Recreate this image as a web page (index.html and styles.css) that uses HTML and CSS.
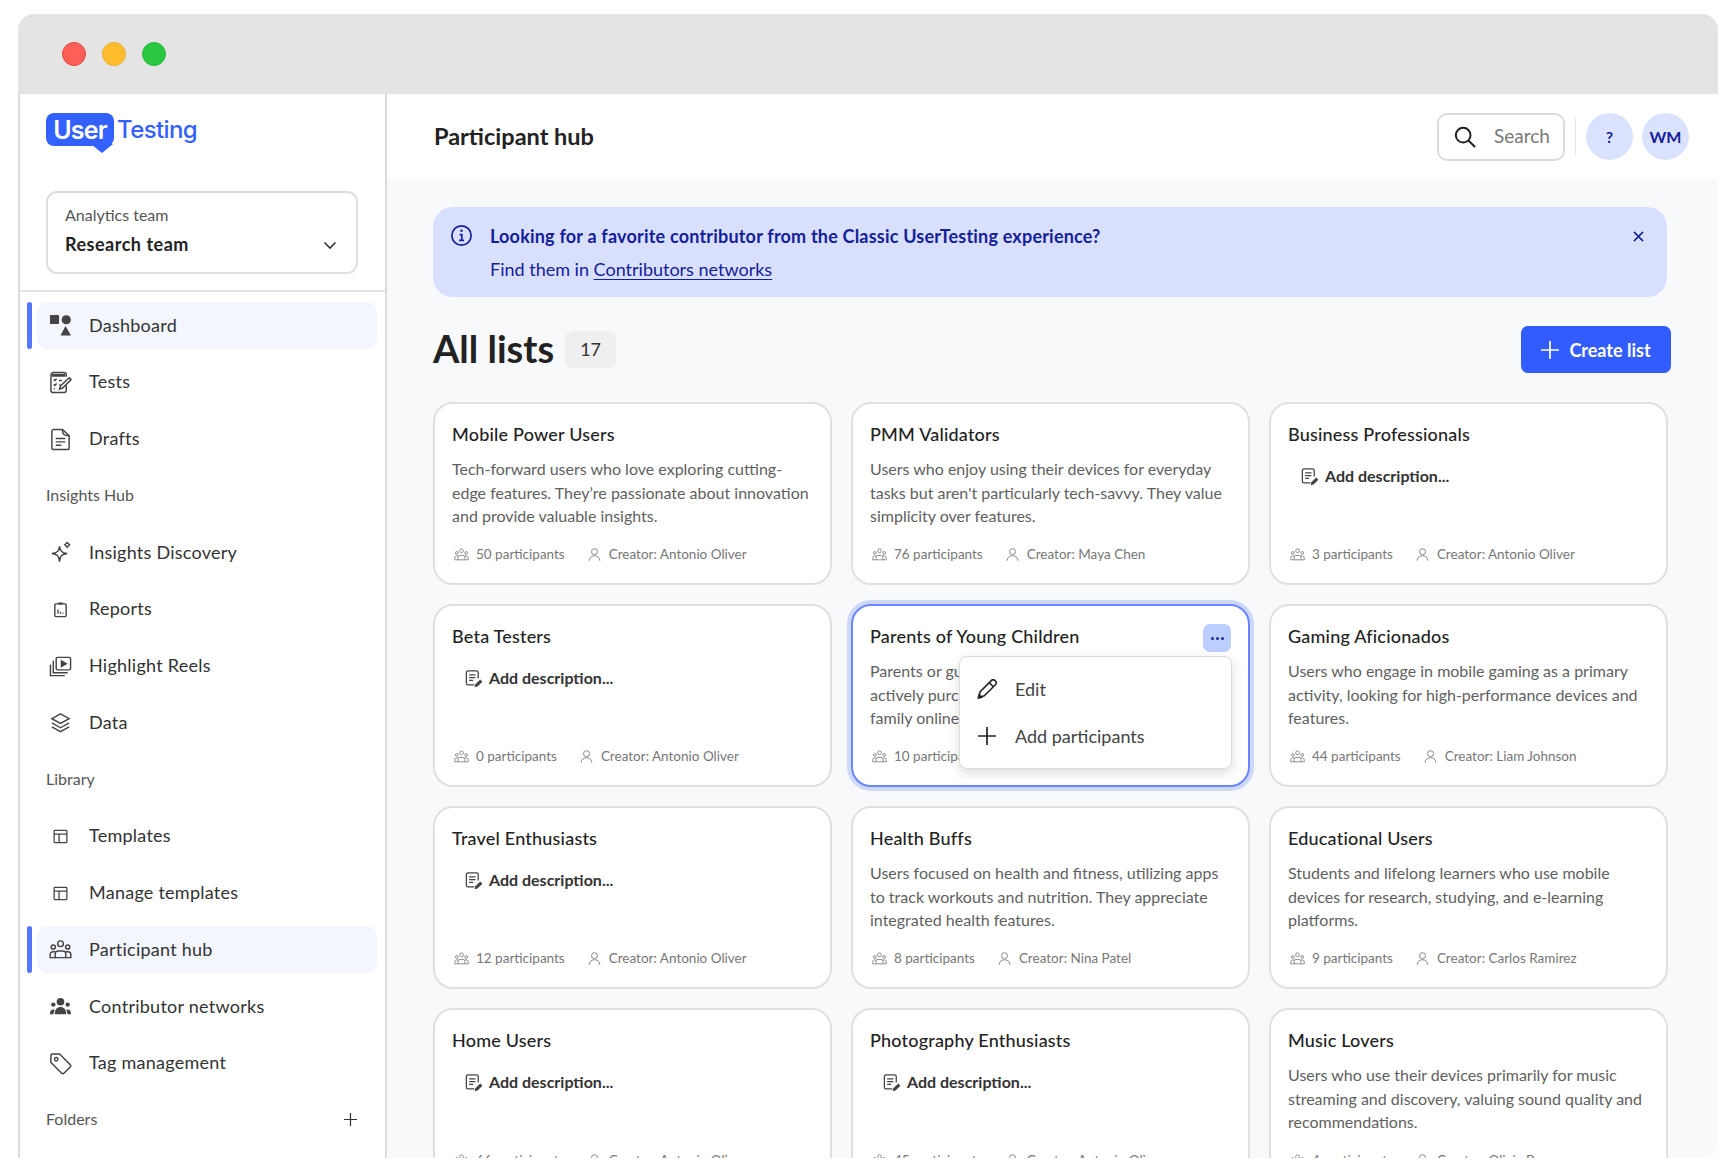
FILE: index.html
```html
<!DOCTYPE html>
<html lang="en">
<head>
<meta charset="utf-8">
<title>Participant hub</title>
<link rel="stylesheet" href="styles.css">
</head>
<body>
<svg class="defs" width="0" height="0" aria-hidden="true">
  <symbol id="i-group" viewBox="0 0 24 24" fill="none" stroke="currentColor" stroke-width="1.5">
    <circle cx="12" cy="6" r="3"/><circle cx="4.5" cy="9.5" r="2.2"/><circle cx="19.5" cy="9.5" r="2.2"/>
    <path d="M6.5 20.5v-4a3 3 0 0 1 3-3h5a3 3 0 0 1 3 3v4z"/><path d="M6.5 20.5H1.2v-3.2a3 3 0 0 1 3-3h2.6M17.5 20.5h5.3v-3.2a3 3 0 0 0-3-3h-2.6"/>
  </symbol>
  <symbol id="i-person" viewBox="0 0 24 24" fill="none" stroke="currentColor" stroke-width="1.6">
    <circle cx="12" cy="7.5" r="4.8"/><path d="M3.5 22c0-5 3.5-8 8.5-8s8.500 3 8.500 8"/>
  </symbol>
  <symbol id="i-adddesc" viewBox="0 0 24 24" fill="none" stroke="currentColor" stroke-width="1.6">
    <path d="M13 20H5a2 2 0 0 1-2-2V4.500a2 2 0 0 1 2-2h11a2 2 0 0 1 2 2V12"/><path d="M6.500 7.500h8M6.500 11h8M6.500 14.500h5"/>
    <path d="M13.500 23l.8-3.600 6.200-6.200 2.800 2.800-6.200 6.200z" fill="currentColor" stroke="none"/>
  </symbol>
  <symbol id="i-template" viewBox="0 0 24 24" fill="none" stroke="currentColor" stroke-width="1.800">
    <rect x="3" y="3.500" width="18" height="17" rx="1"/><path d="M3 8.500h18M10 8.500v12"/>
  </symbol>
  <symbol id="i-plus" viewBox="3 3 18 18" fill="none" stroke="currentColor" stroke-width="1.700">
    <path d="M12 3v18M3 12h18"/>
  </symbol>
</svg>

<div class="window">
  <div class="titlebar">
    <span class="light light-red"></span>
    <span class="light light-yellow"></span>
    <span class="light light-green"></span>
  </div>
  <div class="app">
    <aside class="sidebar">
      <div class="brand">
        <div class="logo"><span class="logo-user">User</span><span class="logo-testing">Testing</span></div>
        <div class="team">
          <div class="team-text">
            <div class="team-label">Analytics team</div>
            <div class="team-name">Research team</div>
          </div>
          <svg class="team-chevron" viewBox="0 0 14 9" fill="none" stroke="currentColor" stroke-width="1.600"><path d="M1.500 1.500L7 7l5.500-5.500"/></svg>
        </div>
      </div>
      <nav class="nav">
        <a class="nav-item is-active">
          <svg class="nav-icon" viewBox="0 0 24 24" fill="currentColor"><rect x="1" y="1" width="9.500" height="9.500" rx="1"/><circle cx="18" cy="6" r="4.800"/><path d="M17.200 12.500L23 22.500H12z"/></svg>
          <span>Dashboard</span>
        </a>
        <a class="nav-item">
          <svg class="nav-icon" viewBox="0 0 24 24" fill="none" stroke="currentColor" stroke-width="1.500"><path d="M18 15v5a2.500 2.500 0 0 1-2.500 2.500h-11A2.500 2.500 0 0 1 2 20V4a2.500 2.500 0 0 1 2.500-2.500h11A2.500 2.500 0 0 1 18 4v2"/><path d="M3 4.500h14" stroke-width="3"/><path d="M5 9l1 1 2-2M5 14l1 1 2-2M10.500 10h3M10.500 14.500H12M5 18.500h1"/><path d="M11 19l1-3.500L21 7l2 2-8.500 8.500z"/></svg>
          <span>Tests</span>
        </a>
        <a class="nav-item">
          <svg class="nav-icon" viewBox="0 0 24 24" fill="none" stroke="currentColor" stroke-width="1.500"><path d="M14 1.500H5a2 2 0 0 0-2 2v17a2 2 0 0 0 2 2h14a2 2 0 0 0 2-2V8z"/><path d="M14 1.500C14 6 15 8 21 8"/><path d="M7 11h10M7 14.500h10M7 18h6"/></svg>
          <span>Drafts</span>
        </a>
        <div class="nav-label">Insights Hub</div>
        <a class="nav-item">
          <svg class="nav-icon" viewBox="0 0 24 24" fill="none" stroke="currentColor" stroke-width="1.500"><path d="M11 5.500c.6 5 2.500 6.900 8 7.500-5.500.6-7.400 2.500-8 8.500-.6-6-2.500-7.900-8-8.500 5.500-.6 7.400-2.500 8-7.500z"/><path d="M19 1.500l2.500 2.500-2.500 2.500L16.500 4z"/></svg>
          <span>Insights Discovery</span>
        </a>
        <a class="nav-item">
          <svg class="nav-icon nav-icon-sm" viewBox="0 0 24 24" fill="none" stroke="currentColor" stroke-width="2"><rect x="4" y="4" width="16" height="18" rx="1.500"/><path d="M9 3.500h6" stroke-width="3"/><path d="M8.500 18v-6M12 18v-3M15.500 18v-1.500" stroke-width="1.800"/></svg>
          <span>Reports</span>
        </a>
        <a class="nav-item">
          <svg class="nav-icon" viewBox="0 0 24 24" fill="none" stroke="currentColor" stroke-width="1.500"><rect x="7.500" y="2.500" width="15" height="13" rx="1.500"/><path d="M13 6l5 3-5 3z" fill="currentColor"/><path d="M4.500 6v12.500h15M1.500 10v11.500h15"/></svg>
          <span>Highlight Reels</span>
        </a>
        <a class="nav-item">
          <svg class="nav-icon" viewBox="0 0 24 24" fill="none" stroke="currentColor" stroke-width="1.500"><path d="M12 3l9 5-9 5-9-5z"/><path d="M3 12.500l9 5 9-5M3 16.500l9 5 9-5"/></svg>
          <span>Data</span>
        </a>
        <div class="nav-label">Library</div>
        <a class="nav-item">
          <svg class="nav-icon nav-icon-sm"><use href="#i-template"/></svg>
          <span>Templates</span>
        </a>
        <a class="nav-item">
          <svg class="nav-icon nav-icon-sm"><use href="#i-template"/></svg>
          <span>Manage templates</span>
        </a>
        <a class="nav-item is-active">
          <svg class="nav-icon"><use href="#i-group"/></svg>
          <span>Participant hub</span>
        </a>
        <a class="nav-item">
          <svg class="nav-icon" viewBox="0 0 24 24" fill="currentColor"><circle cx="12" cy="7" r="4"/><circle cx="4.500" cy="10" r="2.300"/><circle cx="19.500" cy="10" r="2.300"/><path d="M6 20c0-5 2.500-7.500 6-7.500s6 2.500 6 7.500z"/><path d="M1 20c0-3 1-5 3.500-5 1 0 1.500.3 1.500.3L4.500 20zM23 20c0-3-1-5-3.500-5-1 0-1.500.3-1.500.3l1.500 4.700z"/></svg>
          <span>Contributor networks</span>
        </a>
        <a class="nav-item">
          <svg class="nav-icon" viewBox="0 0 24 24" fill="none" stroke="currentColor" stroke-width="1.500"><path d="M2 3.500A1.500 1.500 0 0 1 3.500 2h7.500l11 11a2 2 0 0 1 0 2.800L15.800 22a2 2 0 0 1-2.800 0L2 11z"/><circle cx="7.500" cy="7.500" r="1.800"/></svg>
          <span>Tag management</span>
        </a>
        <div class="nav-label nav-label-row">
          <span>Folders</span>
          <svg class="folder-plus"><use href="#i-plus"/></svg>
        </div>
      </nav>
    </aside>

    <main class="main">
      <header class="topbar">
        <h1 class="page-title">Participant hub</h1>
        <div class="top-actions">
          <div class="search">
            <svg class="search-icon" viewBox="0 0 24 24" fill="none" stroke="currentColor" stroke-width="2.200"><circle cx="10" cy="10" r="8"/><path d="M16 16l7 7"/></svg>
            <span>Search</span>
          </div>
          <span class="top-sep"></span>
          <span class="avatar avatar-help">?</span>
          <span class="avatar">WM</span>
        </div>
      </header>

      <div class="content">
        <section class="banner">
          <svg class="banner-info" viewBox="1 1 22 22" fill="none" stroke="currentColor" stroke-width="1.800"><circle cx="12" cy="12" r="10.100"/><path d="M10 11h2.300v6M9.500 17.200h5.200"/><circle cx="12" cy="7" r="1.300" fill="currentColor" stroke="none"/></svg>
          <div class="banner-text">
            <div class="banner-title">Looking for a favorite contributor from the Classic UserTesting experience?</div>
            <div class="banner-sub">Find them in <a class="banner-link">Contributors networks</a></div>
          </div>
          <svg class="banner-close" viewBox="0 0 12 12" fill="none" stroke="currentColor" stroke-width="1.700"><path d="M1 1l10 10M11 1L1 11"/></svg>
        </section>

        <div class="lists-head">
          <h2 class="lists-title">All lists</h2>
          <span class="count">17</span>
          <button class="create"><svg class="create-plus"><use href="#i-plus"/></svg>Create list</button>
        </div>

        <div class="grid">
          <article class="card">
            <h3 class="card-title">Mobile Power Users</h3>
            <p class="card-desc">Tech-forward users who love exploring cutting-edge features. They’re passionate about innovation and provide valuable insights.</p>
            <div class="card-meta"><span class="meta"><svg class="meta-icon"><use href="#i-group"/></svg>50 participants</span><span class="meta"><svg class="meta-icon"><use href="#i-person"/></svg>Creator: Antonio Oliver</span></div>
          </article>
          <article class="card">
            <h3 class="card-title">PMM Validators</h3>
            <p class="card-desc">Users who enjoy using their devices for everyday tasks but aren't particularly tech-savvy. They value simplicity over features.</p>
            <div class="card-meta"><span class="meta"><svg class="meta-icon"><use href="#i-group"/></svg>76 participants</span><span class="meta"><svg class="meta-icon"><use href="#i-person"/></svg>Creator: Maya Chen</span></div>
          </article>
          <article class="card">
            <h3 class="card-title">Business Professionals</h3>
            <div class="add-desc"><svg class="add-icon"><use href="#i-adddesc"/></svg>Add description...</div>
            <div class="card-meta"><span class="meta"><svg class="meta-icon"><use href="#i-group"/></svg>3 participants</span><span class="meta"><svg class="meta-icon"><use href="#i-person"/></svg>Creator: Antonio Oliver</span></div>
          </article>

          <article class="card">
            <h3 class="card-title">Beta Testers</h3>
            <div class="add-desc"><svg class="add-icon"><use href="#i-adddesc"/></svg>Add description...</div>
            <div class="card-meta"><span class="meta"><svg class="meta-icon"><use href="#i-group"/></svg>0 participants</span><span class="meta"><svg class="meta-icon"><use href="#i-person"/></svg>Creator: Antonio Oliver</span></div>
          </article>
          <article class="card card-selected">
            <h3 class="card-title">Parents of Young Children</h3>
            <span class="more"><i></i><i></i><i></i></span>
            <p class="card-desc">Parents or guardians of young children who are actively purchasing products and services for their family online.</p>
            <div class="card-meta"><span class="meta"><svg class="meta-icon"><use href="#i-group"/></svg>10 participants</span></div>
            <div class="menu">
              <div class="menu-item">
                <svg class="menu-icon" viewBox="1 1 22 22" fill="none" stroke="currentColor" stroke-width="1.700"><path d="M3 21l1.500-6L17 2.500a2.500 2.500 0 0 1 3.500 0l1 1a2.500 2.500 0 0 1 0 3.500L9 19.500z"/><path d="M14.500 5l4.500 4.500"/><path d="M2.500 22l.8-3.500 2.700 2.700z" fill="currentColor"/></svg>
                <span>Edit</span>
              </div>
              <div class="menu-item">
                <svg class="menu-icon menu-icon-plus"><use href="#i-plus"/></svg>
                <span>Add participants</span>
              </div>
            </div>
          </article>
          <article class="card">
            <h3 class="card-title">Gaming Aficionados</h3>
            <p class="card-desc">Users who engage in mobile gaming as a primary activity, looking for high-performance devices and features.</p>
            <div class="card-meta"><span class="meta"><svg class="meta-icon"><use href="#i-group"/></svg>44 participants</span><span class="meta"><svg class="meta-icon"><use href="#i-person"/></svg>Creator: Liam Johnson</span></div>
          </article>

          <article class="card">
            <h3 class="card-title">Travel Enthusiasts</h3>
            <div class="add-desc"><svg class="add-icon"><use href="#i-adddesc"/></svg>Add description...</div>
            <div class="card-meta"><span class="meta"><svg class="meta-icon"><use href="#i-group"/></svg>12 participants</span><span class="meta"><svg class="meta-icon"><use href="#i-person"/></svg>Creator: Antonio Oliver</span></div>
          </article>
          <article class="card">
            <h3 class="card-title">Health Buffs</h3>
            <p class="card-desc">Users focused on health and fitness, utilizing apps to track workouts and nutrition. They appreciate integrated health features.</p>
            <div class="card-meta"><span class="meta"><svg class="meta-icon"><use href="#i-group"/></svg>8 participants</span><span class="meta"><svg class="meta-icon"><use href="#i-person"/></svg>Creator: Nina Patel</span></div>
          </article>
          <article class="card">
            <h3 class="card-title">Educational Users</h3>
            <p class="card-desc">Students and lifelong learners who use mobile devices for research, studying, and e-learning platforms.</p>
            <div class="card-meta"><span class="meta"><svg class="meta-icon"><use href="#i-group"/></svg>9 participants</span><span class="meta"><svg class="meta-icon"><use href="#i-person"/></svg>Creator: Carlos Ramirez</span></div>
          </article>

          <article class="card">
            <h3 class="card-title">Home Users</h3>
            <div class="add-desc"><svg class="add-icon"><use href="#i-adddesc"/></svg>Add description...</div>
            <div class="card-meta"><span class="meta"><svg class="meta-icon"><use href="#i-group"/></svg>66 participants</span><span class="meta"><svg class="meta-icon"><use href="#i-person"/></svg>Creator: Antonio Oliver</span></div>
          </article>
          <article class="card">
            <h3 class="card-title">Photography Enthusiasts</h3>
            <div class="add-desc"><svg class="add-icon"><use href="#i-adddesc"/></svg>Add description...</div>
            <div class="card-meta"><span class="meta"><svg class="meta-icon"><use href="#i-group"/></svg>45 participants</span><span class="meta"><svg class="meta-icon"><use href="#i-person"/></svg>Creator: Antonio Oliver</span></div>
          </article>
          <article class="card">
            <h3 class="card-title">Music Lovers</h3>
            <p class="card-desc">Users who use their devices primarily for music streaming and discovery, valuing sound quality and recommendations.</p>
            <div class="card-meta"><span class="meta"><svg class="meta-icon"><use href="#i-group"/></svg>4 participants</span><span class="meta"><svg class="meta-icon"><use href="#i-person"/></svg>Creator: Olivia Brown</span></div>
          </article>
        </div>
      </div>
    </main>
  </div>
</div>
</body>
</html>
```

FILE: styles.css
```css
* { box-sizing: border-box; }
html, body { margin: 0; height: 100%; }
body {
  background: #fff;
  overflow: hidden;
  font-family: "Lato", "Open Sans", "Liberation Sans", sans-serif;
  color: #222;
}
.defs { position: absolute; }
h1, h2, h3, p { margin: 0; }

.window {
  margin: 14px 16px 0 18px;
  height: 1144px;
  border-radius: 16px 16px 14px 0;
  overflow: hidden;
  display: flex;
  flex-direction: column;
  background: #fff;
}
.titlebar {
  flex: 0 0 80px;
  background: #e4e4e4;
  display: flex;
  align-items: center;
  gap: 16px;
  padding-left: 44px;
}
.light { width: 24px; height: 24px; border-radius: 50%; border: 1px solid; }
.light-red { background: #ff5f57; border-color: #e0443e; }
.light-yellow { background: #ffbd2e; border-color: #efae2a; }
.light-green { background: #2ac840; border-color: #26bb3a; }

.app { flex: 1; display: flex; min-height: 0; }

/* Sidebar */
.sidebar {
  flex: 0 0 369px;
  border-left: 2px solid #dcdcdc;
  border-right: 2px solid #dcdcdc;
  background: #fff;
}
.brand {
  height: 198px;
  border-bottom: 2px solid #e3e3e3;
  padding: 19px 27px 0 26px;
}
.logo { display: flex; align-items: center; height: 33px; font-family: "Inter", sans-serif; font-weight: 600; font-size: 25px; letter-spacing: -0.8px; }
.logo-user {
  position: relative;
  background: #3361ff;
  color: #fff;
  height: 33px;
  width: 68px;
  border-radius: 8px;
  display: flex;
  align-items: center;
  justify-content: center;
}
.logo-user::after {
  content: "";
  position: absolute;
  left: 45px;
  top: 31px;
  width: 22px;
  height: 9px;
  background: #3361ff;
  clip-path: polygon(0 0, 100% 0, 50% 100%, 30% 60%);
}
.logo-testing { color: #3361ff; margin-left: 3px; font-size: 24px; font-weight: 500; letter-spacing: -0.6px; }

.team {
  margin-top: 45px;
  height: 83px;
  border: 2px solid #dedede;
  border-radius: 11px;
  padding: 0 18px 0 17px;
  display: flex;
  align-items: center;
  justify-content: space-between;
}
.team-text { margin-top: -5px; }
.team-label { font-size: 16px; color: #555; line-height: 20px; }
.team-name { font-size: 18px; font-weight: 700; color: #222; line-height: 22px; margin-top: 8px; letter-spacing: .5px; }
.team-chevron { width: 14px; height: 9px; color: #333; margin-top: 26px; margin-right: 1px; }

.nav {
  padding: 10px 8px 0 17px;
  display: flex;
  flex-direction: column;
  gap: 9.75px;
}
.nav-item {
  position: relative;
  height: 47px;
  border-radius: 11px;
  display: flex;
  align-items: center;
  gap: 17px;
  padding-left: 12px;
  font-size: 18px;
  letter-spacing: .25px;
  color: #333;
}
.nav-item span, .nav-label span { margin-top: -2px; }
.nav-item.is-active { background: #f3f6fe; }
.nav-item.is-active::before {
  content: "";
  position: absolute;
  left: -10px;
  top: 0;
  width: 5px;
  height: 47px;
  border-radius: 3px;
  background: #5676ff;
}
.nav-icon { width: 23px; height: 23px; color: #444; flex: none; }
.nav-icon-sm { padding: 3px; }
.nav-label {
  height: 45px;
  margin-bottom: 2px;
  display: flex;
  align-items: center;
  padding-left: 9px;
  font-size: 16px;
  color: #555;
}
.nav-label-row { justify-content: space-between; padding-right: 20px; }
.folder-plus { width: 13px; height: 13px; color: #333; margin-top: 1px; }

/* Main */
.main { flex: 1; min-width: 0; display: flex; flex-direction: column; background: #f8f9fb; }
.topbar {
  flex: 0 0 85px;
  background: #fff;
  display: flex;
  align-items: center;
  justify-content: space-between;
  padding: 0 29px 0 47px;
}
.page-title { font-size: 23.500px; font-weight: 700; color: #222; margin-top: -2px; }
.top-actions { display: flex; align-items: center; }
.search {
  width: 128px;
  height: 48px;
  border: 2px solid #dcdcdc;
  border-radius: 10px;
  display: flex;
  align-items: center;
  gap: 18px;
  padding-left: 15px;
  font-size: 19px;
  color: #777;
  background: #fff;
}
.search span { margin-top: -2px; }
.search-icon { width: 22px; height: 22px; color: #222; flex: none; }
.top-sep { width: 1px; height: 38px; background: #e6e6e6; margin: 0 10px; }
.avatar {
  width: 47px;
  height: 47px;
  border-radius: 50%;
  background: #dbe2fd;
  color: #14209a;
  font-size: 16px;
  font-weight: 700;
  display: flex;
  align-items: center;
  justify-content: center;
}
.avatar-help { margin-right: 9px; }

.content { flex: 1; min-height: 0; padding: 28px 50px 0 46px; }
.banner {
  height: 90px;
  margin-right: 1px;
  border-radius: 20px;
  background: #d9e0fd;
  color: #14209a;
  display: flex;
  padding: 13px 18px 0 18px;
}
.banner-info { width: 21px; height: 21px; margin: 5px 18px 0 0; flex: none; }
.banner-text { flex: 1; font-size: 18px; line-height: 33px; }
.banner-title { font-weight: 700; letter-spacing: .2px; }
.banner-link { text-decoration: underline; text-underline-offset: 3px; text-decoration-thickness: 1px; }
.banner-close { width: 11px; height: 11px; margin-top: 11px; margin-right: 5px; }

.lists-head { margin-top: 29px; height: 47px; display: flex; align-items: center; margin-right: -3px; }
.lists-title { font-size: 38px; font-weight: 700; color: #222; margin-top: -4px; }
.count {
  margin-left: 11px;
  width: 51px;
  height: 37px;
  border-radius: 8px;
  background: #efefef;
  font-size: 18px;
  color: #333;
  display: flex;
  align-items: center;
  justify-content: center;
  padding-bottom: 2px;
}
.create {
  margin-left: auto;
  width: 150px;
  height: 47px;
  border: 0;
  border-radius: 7px;
  background: #335cff;
  color: #fff;
  font: 700 18px "Lato", sans-serif;
  display: flex;
  align-items: center;
  justify-content: center;
  gap: 10px;
  padding-bottom: 1px;
}
.create-plus { width: 18px; height: 18px; }

.grid {
  margin-top: 29px;
  display: grid;
  grid-template-columns: repeat(3, 1fr);
  grid-auto-rows: 183px;
  gap: 19px;
}
.card {
  position: relative;
  background: #fff;
  border: 2px solid #e0e0e0;
  border-radius: 20px;
  padding: 18px 17px 0 17px;
}
.card-selected {
  border: 2px solid #6a87ff;
  box-shadow: 0 0 0 4px #cdd8fb;
}
.card-title { font-size: 18px; font-weight: 500; color: #222; line-height: 24px; letter-spacing: .2px; }
.card-desc { margin-top: 11px; font-size: 16px; line-height: 23.7px; color: #5f5f5f; }
.add-desc {
  margin-top: 18px;
  display: flex;
  align-items: center;
  gap: 6px;
  padding-left: 12px;
  font-size: 16px;
  font-weight: 700;
  color: #333;
  line-height: 24px;
}
.add-icon { width: 19px; height: 19px; color: #444; }
.card-meta {
  position: absolute;
  left: 19px;
  top: 142px;
  display: flex;
  gap: 22px;
  font-size: 13.500px;
  color: #777;
}
.meta { display: flex; align-items: center; gap: 7px; white-space: nowrap; }
.meta-icon { width: 15px; height: 15px; color: #888; flex: none; }

.more {
  position: absolute;
  right: 17px;
  top: 18px;
  width: 28px;
  height: 28px;
  border-radius: 7px;
  background: #bccdff;
  display: flex;
  align-items: center;
  justify-content: center;
  gap: 2px;
}
.more i { width: 3px; height: 3px; border-radius: 50%; background: #1c2b8f; }
.menu {
  position: absolute;
  left: 106px;
  top: 50px;
  width: 273px;
  height: 113px;
  background: #fff;
  border: 1px solid #dcdcdc;
  border-radius: 8px;
  box-shadow: 0 4px 12px rgba(0,0,0,.14);
  padding: 8px 0 0 17px;
}
.menu-item {
  height: 47px;
  display: flex;
  align-items: center;
  gap: 18px;
  font-size: 18px;
  color: #444;
}
.menu-icon { width: 20px; height: 20px; color: #222; flex: none; }
.menu-icon-plus { padding: 1px; }
```
